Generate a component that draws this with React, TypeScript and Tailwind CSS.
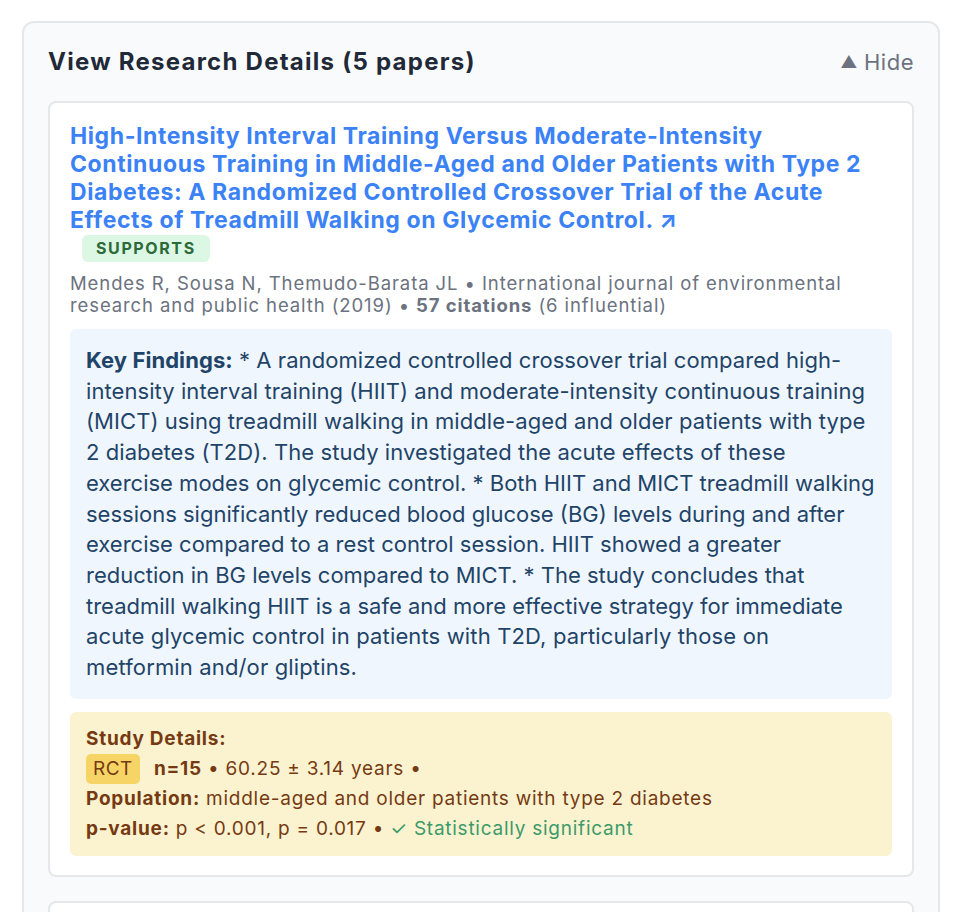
const papers = [
  {
    title:
      "High-Intensity Interval Training Versus Moderate-Intensity Continuous Training in Middle-Aged and Older Patients with Type 2 Diabetes: A Randomized Controlled Crossover Trial of the Acute Effects of Treadmill Walking on Glycemic Control.",
    stance: "SUPPORTS",
    authors: "Mendes R, Sousa N, Themudo-Barata JL",
    journal: "International journal of environmental research and public health",
    year: 2019,
    citations: 57,
    influential: 6,
    // split in three runs so the wrap lands where the original font puts it
    findings: [
      "* A randomized controlled crossover trial compared high-intensity interval training (HIIT) and moderate-intensity continuous training (MICT) using treadmill walking in middle-aged and older patients with type 2 diabetes (T2D). The study investigated the acute effects of these ",
      "exercise modes on glycemic control. * Both HIIT and MICT treadmill walking sessions significantly reduced blood glucose (BG) levels during and after exercise compared to a rest control session. HIIT showed a greater reduction in BG levels compared to MICT. * The study concludes that treadmill walking HIIT is a safe and more effective strategy for immediate ",
      "acute glycemic control in patients with T2D, particularly those on metformin and/or gliptins.",
    ],
    design: "RCT",
    n: 15,
    age: "60.25 ± 3.14 years",
    population: "middle-aged and older patients with type 2 diabetes",
    pvalue: "p < 0.001, p = 0.017",
  },
  {
    title: "Effects of exercise training on glycemic control in type 2 diabetes: a systematic review.",
    stance: "SUPPORTS",
    authors: "Smith A, Jones B",
    journal: "Diabetes Care",
    year: 2018,
    citations: 120,
    influential: 10,
    findings: ["* Exercise training improves HbA1c in adults with type 2 diabetes.", "", ""],
    design: "SR",
    n: 800,
    age: "55 ± 8 years",
    population: "adults with type 2 diabetes",
    pvalue: "p < 0.05",
  },
];

const PaperCard = ({ p }: { p: (typeof papers)[number] }) => {
  return (
    <div className="bg-white border-2 border-[#e5e7eb] rounded-lg px-5 pt-[19px] pb-[19px]">
      {/* title */}
      <h3 className="text-[23px] leading-[28px] font-bold tracking-[0.6px] text-[#3b82f6]">
        <a href="#">{p.title} ↗</a>
      </h3>
      {/* stance badge sits on its own line */}
      <div>
        <span className="inline-block ml-3 mt-[1px] px-[14px] h-[27px] leading-[27px] rounded-md bg-[#dcf7e3] text-[#2d6a3a] text-[16px] font-bold tracking-[0.1em]">
          {p.stance}
        </span>
      </div>
      <p className="mt-[10px] text-[18.5px] leading-[22px] tracking-[0.9px] text-[#6b7280]">
        {p.authors} • {p.journal} ({p.year}) • <b className="font-bold">{p.citations} citations</b> ({p.influential} influential)
      </p>

      <div className="mt-[13px] rounded-md bg-[#eff6fd] px-4 py-4 text-[22px] leading-[30.7px] text-[#1f4468]">
        <span className="tracking-[0.07px]">
          <b className="font-bold">Key Findings:</b> {p.findings[0]}
        </span>
        <span className="tracking-[0px]">{p.findings[1]}</span>
        <span className="tracking-[0.14px]">{p.findings[2]}</span>
      </div>

      <div className="mt-[13px] rounded-md bg-[#fbf3cf] px-4 py-3 text-[19px] leading-[30px] tracking-[0.75px] text-[#763a13]">
        <div className="font-bold">Study Details:</div>
        <div className="flex items-center">
          <span className="bg-[#f6d566] rounded-[5px] px-[7px] h-[30px] leading-[30px] tracking-[0.5px]">{p.design}</span>
          <span className="ml-[14px]">
            <b className="font-bold">n={p.n}</b> • {p.age} •
          </span>
        </div>
        <div>
          <b className="font-bold">Population:</b> {p.population}
        </div>
        <div>
          <b className="font-bold">p-value:</b> {p.pvalue} • <span className="text-[#3c9a6a]">✓ Statistically significant</span>
        </div>
      </div>
    </div>
  );
};

export default function App() {
  return (
    <div className="min-h-screen bg-white px-[22px] pt-[21px] pb-6" style={{ fontFamily: "Inter, 'Noto Sans', sans-serif" }}>
      <div className="bg-[#f9fafb] border-2 border-[#e5e7eb] rounded-xl p-6">
        <div className="flex items-center justify-between mb-6">
          <h2 className="text-[24px] leading-[30px] font-bold tracking-[1.25px] text-[#1f2937]">View Research Details (5 papers)</h2>
          <button className="text-[22px] leading-[30px] tracking-[0.5px] text-[#6b7280] flex items-center gap-[6px]">
            <span className="text-[17px]">▲</span>
            <span>Hide</span>
          </button>
        </div>
        <div className="flex flex-col gap-6">
          {papers.map((p, i) => (
            <PaperCard key={i} p={p} />
          ))}
        </div>
      </div>
    </div>
  );
}
